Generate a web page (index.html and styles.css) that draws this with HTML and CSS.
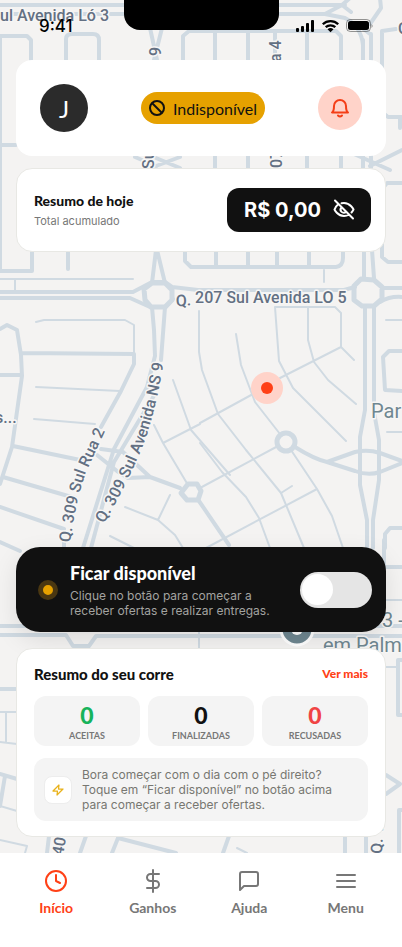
FILE: index.html
```html
<!DOCTYPE html>
<html lang="pt-BR">
<head>
<meta charset="utf-8">
<meta name="viewport" content="width=device-width, initial-scale=1">
<title>Início</title>
<link rel="stylesheet" href="styles.css">
</head>
<body>
<div class="app">
  <svg class="map" viewBox="0 0 402 947" preserveAspectRatio="xMidYMin slice" aria-hidden="true">
    <g class="road road-main">
      <path d="M0 5H345M0 14H325L342 5 350 -2M325 14 345 18Q361 26 363 45M358 25 370 34M380 -2 381 8 370 24M342 5 351 12"/>
      <path d="M150 28 157 60M162 28 154 60M363 40V170M371 34V170"/>
      <path d="M183 60V36L189 31H336L341 36V60M215 31V60M248 31V60M275 31V60M307 31V60"/>
      <path d="M66 60V39Q66 34 72 34H93Q99 34 99 40V60M0 36H27L31 40V60"/>
      <path d="M396 29 382 31V112L388 117H402M0 145H16M0 36V270M0 271H32V250M400 117V128"/>
      <path d="M135 157 156 166 180 157M156 166V170M180 168 156 158M345 150 390 170M402 150 370 166M341 156V170M215 156V170M248 156V170M307 156V170"/>
      <path d="M185 250V261L191 267H336Q343 266 343 258V250M216 250V267M248 250V267M277 250V267M309 250V267M68 250V269M402 183H387L382 189V257L388 262H402"/>
      <path d="M156 250 152 283M157 250 165 283M364 250V278M372 250 374 278"/>
      <path d="M0 292H133L152 282H165L172 287 198 290H344L355 287M0 298H130L150 307H166L173 299"/>
      <path class="thick" d="M152 283 144 289 145 300 151 307H165L172 300V290L165 283ZM361 279 354 286V300L362 306H374L382 299V287L374 280Z"/>
      <path d="M152 307 154 330 155 356 147 387 114 449 83 548M165 307 161 360M155 394 114 462 91 548M382 288H402M380 302Q390 296 402 297"/>
      <path d="M0 329 7 325 17 330 21 355 22 376 12 447 0 484M22 353 134 354 134 364 121 391 101 427M0 375H21M13 446 85 461M3 477 75 498M0 507 64 529M0 542 20 551"/>
      <path d="M101 449 123 452 150 477 180 488M97 455 117 471 128 478 150 477M64 540V550M199 501 229 545"/>
      <path class="thick" d="M188 484H197L201 491 198 500H187L181 493Z"/>
      <path d="M365 306V410L360 437V485L367 520V548M374 306V412L379 440V480L373 520V548"/>
      <circle class="thick" cx="286" cy="442" r="9"/>
      <path d="M295 447Q314 459 327 462L355 452Q368 449 380 453L402 461M327 462 355 471Q368 476 380 472L402 463M402 351H389L383 357 385 390 402 391M402 528H390L385 534V548"/>
    </g>
    <g class="road road-small">
      <path d="M0 279H133M15 279V291M36 322 44 320H125L134 325V352M36 387 120 391M34 419 95 424M324 270V282"/>
      <path d="M173 380 191 430 230 475M154 425 163 443 188 485M163 443 200 424M200 423 253 394M280 378 341 347 354 360M199 311V352L202 370 218 414 246 450 281 493 304 548M236 334 241 365 255 402 280 434M275 307 279 361 293 388 346 441M275 307H335L341 313V347M308 307V340L314 362 328 380 356 404"/>
      <path d="M200 488 278 446M206 548 317 489M200 443 222 472 246 497 259 518 270 548M291 450 317 489 332 516 343 548M246 497M281 493 292 486M125 507 158 520 175 535 183 548M158 520 170 495M110 536 136 549M386 320H402M387 432H402"/>
    </g>
    <g class="road road-main">
      <path d="M0 626H402M0 635H66L73 646H89L96 636H402M386 567H402M384 540V570M0 689H17M0 774 17 779M5 776 0 806"/>
      <path d="M402 660H398V715H402M386 775 400 784 386 794M402 810H399V853"/>
      <path d="M49 836 47 853M86 836 80 853M112 853 118 838 176 853M229 836 223 853M345 836V853M366 836V853"/>
    </g>
    <g class="road road-small"><path d="M199 632V650M386 600H402M386 667H397M0 712H17M6 712V742M0 742 17 744M0 806 17 811M0 840 27 846 25 853M237 848 247 853"/></g>
    <circle class="poi" cx="297" cy="629" r="16"/>
    <circle cx="297" cy="629" r="6" fill="#fff"/>
    <g class="map-text">
      <text x="0" y="21">ul Avenida Ló 3</text>
      <text transform="translate(161 56) rotate(-90)">9</text>
      <text transform="translate(281 62) rotate(-90)">a 4</text>
      <text transform="translate(154 169) rotate(-90)">Su</text>
      <text transform="translate(282 168) rotate(-90)">07</text>
      <path id="lo5" d="M176 306 Q186 307 197 303H370" fill="none" stroke="none"/>
      <text class="wide"><textPath href="#lo5">Q. 207 Sul Avenida LO 5</textPath></text>
      <path id="rua2" d="M70 543 Q76 500 86 472L114 412" fill="none" stroke="none"/>
      <text><textPath href="#rua2">Q. 309 Sul Rua 2</textPath></text>
      <path id="ns9" d="M104 524Q132 475 145 440T169 330" fill="none" stroke="none"/>
      <text><textPath href="#ns9">Q. 309 Sul Avenida NS 9</textPath></text>
      <text x="-5" y="423">s...</text>
      <text x="398" y="34">Q</text>
      <text transform="translate(63 856) rotate(-80)">40</text>
      <text transform="translate(382 854) rotate(-88)">Q. 1</text>
    </g>
    <g class="map-text place">
      <text x="371" y="418">Par</text>
      <text x="382" y="627">3 -</text>
      <text x="323" y="652">em Palm</text>
    </g>
    <circle cx="267" cy="388" r="16" fill="#ffd3c9"/>
    <circle cx="267" cy="388" r="6" fill="#ff4016"/>
  </svg>

  <header class="status">
    <time class="clock">9:41</time>
    <span class="notch"></span>
    <svg class="status-icons" width="76" height="14" viewBox="0 0 76 14" aria-hidden="true">
      <g fill="#000"><rect x="0" y="9" width="3" height="4" rx="1"/><rect x="5" y="7" width="3" height="6" rx="1"/><rect x="10" y="4" width="3" height="9" rx="1"/><rect x="15" y="1" width="3" height="12" rx="1"/></g>
      <g fill="none" stroke="#000" stroke-width="2.3"><path d="M26.8 5.2a11 11 0 0 1 15.4 0M29.7 8.2a7 7 0 0 1 9.6 0"/></g><path d="M31.5 10.3q3-2.4 6 0L34.5 13.2Z"/>
      <rect x="50.5" y=".5" width="24" height="12" rx="3.8" fill="none" stroke="#000" stroke-opacity=".4"/><rect x="52" y="2" width="21" height="9" rx="2.5"/><path d="M75.5 5v4q1.2-.8 1.2-2t-1.2-2" fill="#000" fill-opacity=".4"/>
    </svg>
  </header>

  <main class="content">
    <section class="card profile">
      <span class="avatar">J</span>
      <span class="badge">
        <svg width="16" height="16" viewBox="0 0 16 16" fill="none" stroke="#111" stroke-width="2"><circle cx="8" cy="8" r="7"/><path d="m3 3 10 10"/></svg>
        Indisponível
      </span>
      <button class="bell" type="button" aria-label="Notificações">
        <svg width="22" height="22" viewBox="0 0 22 22" fill="none" stroke="#f43e17" stroke-width="2" stroke-linejoin="round"><path d="M3 15.500H19C17 14 17 12 17 9A6 6 0 0 0 5 9C5 12 5 14 3 15.500Z"/><path d="M9 18.500Q11 20.500 13 18.500" stroke-linecap="round"/></svg>
      </button>
    </section>

    <section class="card outlined today">
      <div><h2 class="today-title">Resumo de hoje</h2><p class="today-sub">Total acumulado</p></div>
      <button class="amount" type="button">R$ 0,00
        <svg width="24" height="24" viewBox="0 0 24 24" fill="none" stroke="#fff" stroke-width="2" stroke-linecap="round" stroke-linejoin="round"><path d="M6 6.500C3.500 8.500 2.500 11.500 2.500 11.500S5.500 18 12 18C14 18 15.500 17.500 17 16.500M9.500 5.300Q10.700 5 12 5C18.500 5 21.500 11.500 21.500 11.500S20.800 13 19.500 14.500M9.500 9.500A3 3 0 0 0 14 13.800M3 2.500 21 20.500"/></svg>
      </button>
    </section>

    <section class="online">
      <span class="dot"></span>
      <label class="online-text" for="online"><strong>Ficar disponível</strong><span>Clique no botão para começar a receber ofertas e realizar entregas.</span></label>
      <input class="switch" id="online" type="checkbox" role="switch">
    </section>

    <section class="card outlined run">
      <div class="run-head"><h2>Resumo do seu corre</h2><a href="#mais">Ver mais</a></div>
      <dl class="stats">
        <div><dt>ACEITAS</dt><dd class="green">0</dd></div>
        <div><dt>FINALIZADAS</dt><dd>0</dd></div>
        <div><dt>RECUSADAS</dt><dd class="red">0</dd></div>
      </dl>
      <div class="tip">
        <span class="tip-icon"><svg width="12" height="12" viewBox="0 0 24 24" fill="none" stroke="#e9b21a" stroke-width="2.500" stroke-linejoin="round"><path d="M14 2 2 14h9l-1 8 12-12h-9Z"/></svg></span>
        <p>Bora começar com o dia com o pé direito? Toque em “Ficar disponível” no botão acima para começar a receber ofertas.</p>
      </div>
    </section>
  </main>

  <nav class="tabs">
    <a class="active" href="#inicio"><svg width="24" height="24" viewBox="0 0 24 24"><circle cx="12" cy="12" r="10"/><path d="M12 6v6l4 2"/></svg>Início</a>
    <a href="#ganhos"><svg width="24" height="24" viewBox="0 0 24 24"><path d="M12 1v22M18 5H9.500a3.500 3.500 0 0 0 0 7h5a3.500 3.500 0 0 1 0 7H6"/></svg>Ganhos</a>
    <a href="#ajuda"><svg width="24" height="24" viewBox="0 0 24 24"><path d="M21 15a2 2 0 0 1-2 2H7l-4 4V5a2 2 0 0 1 2-2h14a2 2 0 0 1 2 2z"/></svg>Ajuda</a>
    <a href="#menu"><svg width="24" height="24" viewBox="0 0 24 24"><path d="M3 6h18M3 12h18M3 18h18"/></svg>Menu</a>
  </nav>
</div>
</body>
</html>
```
FILE: styles.css
```css
* { box-sizing: border-box; margin: 0; }
body { font-family: Inter, sans-serif; color: #111; background: #f4f3f2; }
button { border: 0; padding: 0; font: inherit; cursor: pointer; }
a { text-decoration: none; }

.app { position: relative; min-height: 100vh; display: flex; flex-direction: column; overflow: hidden; }
.map { position: absolute; inset: 0; width: 100%; height: 100%; }
.road { fill: none; stroke: #d0dae2; stroke-linejoin: round; stroke-linecap: round; }
.road-main { stroke-width: 4; }
.road-small { stroke-width: 2; }
.thick { stroke-width: 5; }
.poi { fill: #6f8791; stroke: #fff; stroke-width: 3; }
.map-text { font: 500 16px Roboto, sans-serif; fill: #637083; stroke: #f7f6f5; stroke-width: 3; paint-order: stroke; stroke-linejoin: round; }
.place { font-size: 20px; font-weight: 400; fill: #6f8791; }

.status { position: relative; height: 60px; display: grid; grid-template-columns: 1fr 155px 1fr; }
.clock { padding: 16px 0 0 39px; font-size: 17px; line-height: 20px; font-weight: 500; color: #000; }
.notch { height: 30px; background: #000; border-radius: 0 0 16px 16px; }
.status-icons { justify-self: end; margin: 19px 30px 0 0; overflow: visible; }

.content { position: relative; flex: 1; display: flex; flex-direction: column; padding: 0 16px 16px; }
.card { background: #fff; border-radius: 16px; }
.outlined { border: 1px solid #e8e8e4; }
.profile { display: flex; align-items: center; justify-content: space-between; padding: 24px; }
.avatar { width: 48px; height: 48px; border-radius: 50%; background: #2b2b2b; color: #fff; display: grid; place-items: center; font: 24px Lato, sans-serif; }
.badge { height: 32px; padding: 0 8px; border-radius: 16px; background: #e6a100; display: flex; align-items: center; gap: 8px; font: 16px Lato, sans-serif; }
.bell { width: 44px; height: 44px; border-radius: 50%; background: #ffd3c9; display: grid; place-items: center; }

.today { margin-top: 12px; padding: 19px 14px 19px 17px; display: flex; align-items: center; justify-content: space-between; }
.today-title { font: 900 14px/20px Lato, sans-serif; }
.today-sub { margin-top: 2px; font-size: 11px; line-height: 16px; color: #777; }
.amount { height: 44px; padding: 0 15px 0 17px; border-radius: 12px; background: #111; color: #fff; display: flex; align-items: center; gap: 11px; font-size: 20px; font-weight: 700; }

.online { margin-top: auto; display: flex; align-items: center; padding: 14px 14px 14px 22px; border-radius: 24px; background: #111; box-shadow: 0 8px 24px rgba(0, 0, 0, .1); }
.dot { flex: none; width: 20px; height: 20px; border-radius: 50%; border: 5px solid #4a3711; background: #e6a100; }
.online-text { flex: 1; margin-left: 12px; padding-right: 12px; color: #fff; }
.online-text strong { display: block; margin-bottom: 3px; font: 900 18px/24px Lato, sans-serif; }
.online-text span { display: block; font-size: 12px; line-height: 15px; color: #a3a3a0; }
.switch { appearance: none; flex: none; width: 72px; height: 36px; margin: 0; padding: 2px; border-radius: 18px; background: #e5e5e5; cursor: pointer; }
.switch::before { content: ""; display: block; width: 31px; height: 31px; border-radius: 50%; background: #fff; }
.switch:checked { background: #16b35b; }
.switch:checked::before { margin-left: auto; }

.run { margin-top: 16px; padding: 15px 17px; }
.run-head { display: flex; align-items: center; justify-content: space-between; line-height: 20px; }
.run-head h2 { font: 900 15px/20px Lato, sans-serif; }
.run-head a { font: 900 12px/20px Lato, sans-serif; color: #ff4016; }
.stats { margin-top: 12px; display: grid; grid-template-columns: repeat(3, 1fr); gap: 8px; }
.stats div { height: 50px; display: flex; flex-direction: column-reverse; justify-content: center; align-items: center; border-radius: 12px; background: #f4f4f4; }
.stats dt { font: 700 9px/12px Lato, sans-serif; color: #777; }
.stats dd { font: 900 23px/30px Lato, sans-serif; }
.stats .green { color: #16b35b; }
.stats .red { color: #f04444; }
.tip { margin-top: 12px; padding: 9px 10px; display: flex; align-items: center; gap: 10px; border-radius: 12px; background: #f4f4f4; }
.tip-icon { flex: none; width: 28px; height: 28px; display: grid; place-items: center; border: 1px solid #ededed; border-radius: 8px; background: #fff; }
.tip p { font-size: 12px; line-height: 15px; color: #777771; }

.tabs { position: relative; height: 94px; padding: 16px 8px 0; display: grid; grid-template-columns: repeat(4, 1fr); background: #fff; }
.tabs a { display: flex; flex-direction: column; align-items: center; gap: 5px; font: 700 14px/20px Lato, sans-serif; color: #777; }
.tabs svg { fill: none; stroke: currentColor; stroke-width: 2; stroke-linecap: round; stroke-linejoin: round; }
.tabs .active { color: #ff4016; }
```
